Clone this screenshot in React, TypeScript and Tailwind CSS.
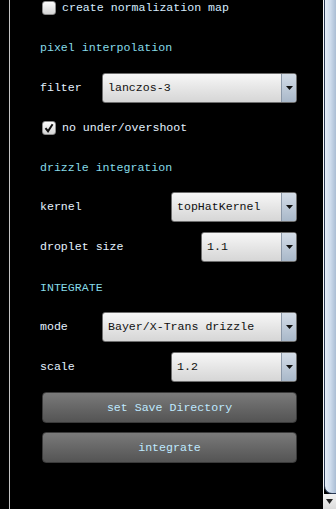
import { ReactNode } from 'react';

const mono = { fontFamily: '"Liberation Mono", "DejaVu Sans Mono", monospace' };

function Check({ checked }: { checked?: boolean }) {
  return (
    <div className="w-[14px] h-[14px] rounded-[3px] border border-[#8c8c8c] bg-gradient-to-b from-[#fdfdfd] to-[#d4d4d4] flex items-center justify-center">
      {checked && (
        <svg width="10" height="10" viewBox="0 0 10 10">
          <path d="M1.5 5.2 L4 8.2 L8.6 1.2" fill="none" stroke="#111" strokeWidth="2" />
        </svg>
      )}
    </div>
  );
}

function Select({ value, width }: { value: string; width: number }) {
  return (
    <div
      className="ml-auto h-[30px] flex rounded-[3px] border border-[#6e6e6e] overflow-hidden bg-gradient-to-b from-[#f7f7f7] via-[#e6e6e6] to-[#d6d6d6]"
      style={{ width }}
    >
      <div className="flex-1 flex items-center pl-[5px] text-[#111]">{value}</div>
      <div className="w-[15px] border-l border-[#8b98a8] bg-gradient-to-b from-[#d4dde8] to-[#a9b8c9] flex items-center justify-center">
        <svg width="7" height="4" viewBox="0 0 7 4">
          <path d="M0 0 H7 L3.5 4 Z" fill="#111" />
        </svg>
      </div>
    </div>
  );
}

function Row({ label, children, className }: { label: string; children: ReactNode; className: string }) {
  return (
    <div className={`flex items-center h-[30px] ${className}`}>
      <span className="text-[#e4f2ff]">{label}</span>
      {children}
    </div>
  );
}

function Header({ text, className }: { text: string; className: string }) {
  return <div className={`h-[16px] flex items-center text-[#86dbe8] ${className}`}>{text}</div>;
}

function Button({ text, className }: { text: string; className: string }) {
  return (
    <div
      className={`ml-[2px] h-[31px] rounded-[4px] border border-[#3a3a3a] bg-gradient-to-b from-[#7a7a7a] to-[#545454] flex items-center justify-center text-[#bfe9ff] ${className}`}
    >
      {text}
    </div>
  );
}

export default function App() {
  return (
    <div className="w-[336px] h-[509px] bg-black flex text-[11.6px] leading-none" style={mono}>
      <div className="w-[9px]" />
      <div className="w-[1px] bg-[#c4c4c4]" />
      <div className="flex-1 flex flex-col pl-[30px] pr-[26px]">
        <div className="h-[16px] flex items-center gap-[6px] ml-[2px]">
          <Check />
          <span className="text-[#d6ecff]">create normalization map</span>
        </div>
        <Header text="pixel interpolation" className="mt-[24px]" />
        <Row label="filter" className="mt-[17px]">
          <Select value="lanczos-3" width={195} />
        </Row>
        <div className="h-[16px] flex items-center gap-[6px] ml-[2px] mt-[17px]">
          <Check checked />
          <span className="text-[#e4f2ff]">no under/overshoot</span>
        </div>
        <Header text="drizzle integration" className="mt-[24px]" />
        <Row label="kernel" className="mt-[16px]">
          <Select value="topHatKernel" width={126} />
        </Row>
        <Row label="droplet size" className="mt-[10px]">
          <Select value="1.1" width={96} />
        </Row>
        <Header text="INTEGRATE" className="mt-[18px]" />
        <Row label="mode" className="mt-[16px]">
          <Select value="Bayer/X-Trans drizzle" width={195} />
        </Row>
        <Row label="scale" className="mt-[10px]">
          <Select value="1.2" width={126} />
        </Row>
        <Button text="set Save Directory" className="mt-[10px]" />
        <Button text="integrate" className="mt-[9px]" />
      </div>
      <div className="w-[13px] flex flex-col">
        <div className="flex-1 flex">
          <div className="w-[1px] bg-[#f4f6f8]" />
          <div className="flex-1 rounded-bl-[8px] border-b border-l border-[#2a3a55] bg-gradient-to-r from-[#e6eef8] via-[#cddbec] to-[#aabdd4]" />
        </div>
        <div className="h-[15px] bg-gradient-to-b from-[#f2f2f2] to-[#dcdcdc] flex items-center justify-center">
          <svg width="7" height="5" viewBox="0 0 7 5">
            <path d="M0 0 H7 L3.5 5 Z" fill="#222" />
          </svg>
        </div>
      </div>
    </div>
  );
}
